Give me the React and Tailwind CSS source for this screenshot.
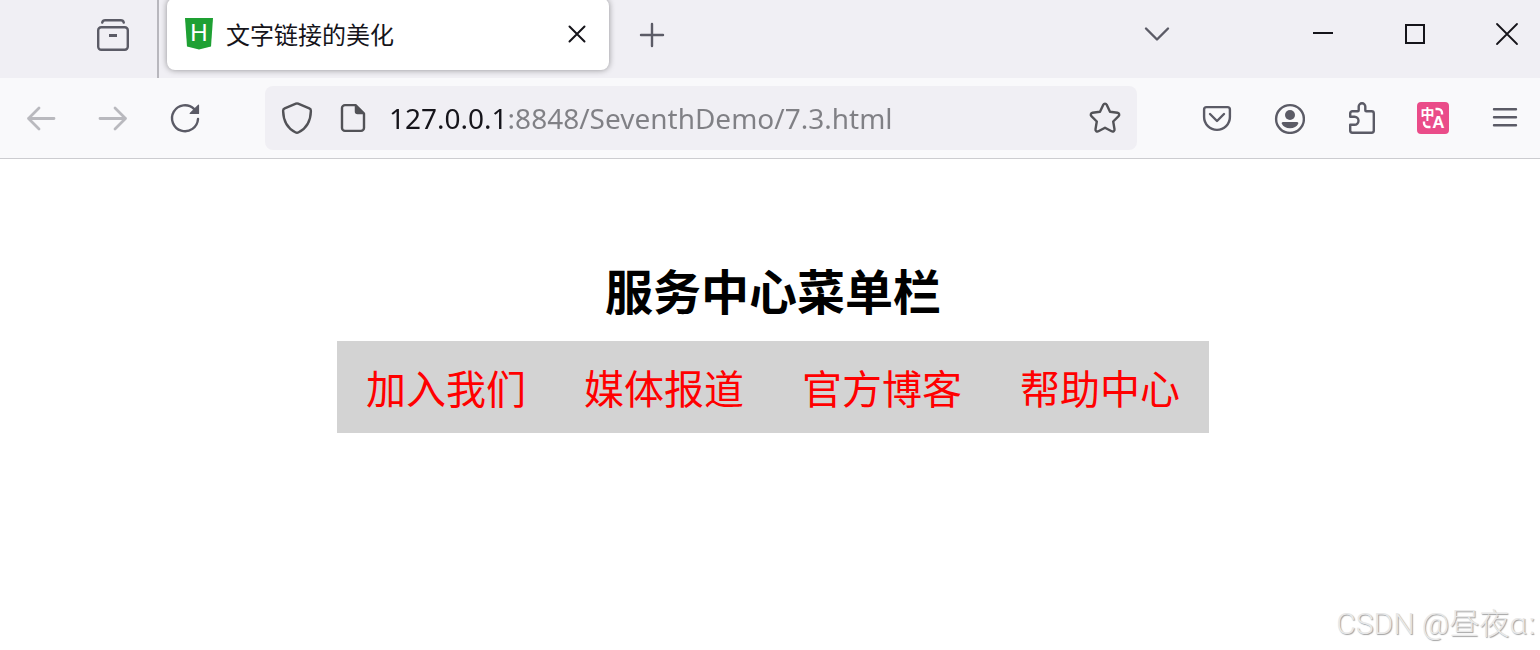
import React, { useState } from 'react';

const MENU_ITEMS = ['加入我们', '媒体报道', '官方博客', '帮助中心'];

// Shared 32px icon frame for the browser chrome
function Icon({ children, className = 'text-[#5b5b66]' }) {
  return (
    <svg
      viewBox="0 0 32 32"
      fill="none"
      stroke="currentColor"
      strokeWidth="2.4"
      strokeLinecap="round"
      strokeLinejoin="round"
      aria-hidden="true"
      className={`size-8 shrink-0 ${className}`}
    >
      {children}
    </svg>
  );
}

function IconButton({ label, children, className = 'w-16', ...props }) {
  return (
    <button
      type="button"
      aria-label={label}
      className={`flex h-16 shrink-0 items-center justify-center ${className}`}
      {...props}
    >
      {children}
    </button>
  );
}

function TabStrip() {
  return (
    <div className="flex h-[78px] items-start overflow-hidden bg-[#f0eff4]">
      <div className="flex h-full w-[159px] shrink-0 items-start justify-end border-r-2 border-[#b8b7bd] pt-[3px] pr-3">
        <IconButton label="Firefox View">
          <Icon>
            <rect x="1.2" y="8.2" width="29.6" height="22.6" rx="3" />
            <path d="M5.2 3.6C5.6 2 6.6 1.2 8.2 1.2h15.6c1.6 0 2.6.8 3 2.4" />
            <path d="M12 16.5h8" strokeWidth="3" strokeLinecap="butt" />
          </Icon>
        </IconButton>
      </div>

      <div className="-mt-0.5 ml-2 flex h-[72px] w-[442px] items-center rounded-lg bg-white pl-4 shadow-[0_0_6px_rgba(0,0,0,0.4)]">
        <svg viewBox="0 0 32 32" aria-hidden="true" className="mr-[11px] size-8 shrink-0">
          <path d="M2 0h28l-2 28.5L16 31.500 4 28.500z" fill="#1ea033" />
          <text
            x="16"
            y="23"
            textAnchor="middle"
            fill="#fff"
            className="font-['Liberation_Sans',sans-serif] text-[24px]"
          >
            H
          </text>
        </svg>
        <span className="flex-1 text-2xl whitespace-nowrap text-[#15141a]">文字链接的美化</span>
        <IconButton label="Close tab">
          <Icon className="text-[#15141a]">
            <path d="M8.500 8.500l15 15M23.500 8.500l-15 15" strokeWidth="2" />
          </Icon>
        </IconButton>
      </div>

      <IconButton label="New tab" className="mt-[3px] ml-[11px] w-16">
        <Icon>
          <path d="M5 16h22M16 5v22" />
        </Icon>
      </IconButton>

      <div className="ml-auto flex pt-0.5 pr-px">
        <IconButton label="List all tabs" className="mr-[102px] w-16">
          <Icon>
            <path d="M5 10.500l11 11 11-11" />
          </Icon>
        </IconButton>
        <div className="flex gap-7">
          <IconButton label="Minimize">
            <Icon className="text-[#15141a]">
              <path d="M6 15h20" strokeWidth="2" strokeLinecap="butt" />
            </Icon>
          </IconButton>
          <IconButton label="Maximize">
            <Icon className="text-[#15141a]">
              <path d="M7 7h18v18H7z" strokeWidth="2" strokeLinejoin="miter" />
            </Icon>
          </IconButton>
          <IconButton label="Close window">
            <Icon className="text-[#15141a]">
              <path d="M6 6l20 20M26 6L6 26" strokeWidth="1.8" />
            </Icon>
          </IconButton>
        </div>
      </div>
    </div>
  );
}

function UrlBar() {
  const [url, setUrl] = useState('127.0.0.1:8848/SeventhDemo/7.3.html');

  return (
    <div className="mx-12 flex h-16 min-w-0 flex-1 items-center rounded-lg bg-[#f0eff4] px-1">
      <IconButton label="Tracking protection" className="w-14">
        <Icon className="text-[#525257]">
          <path d="M14.900 1.700a2.800 2.800 0 0 1 2.200 0l11.200 4.700c1 .400 1.600 1.300 1.600 2.400-.200 8.900-3.800 17.300-12.200 21.500a3.800 3.800 0 0 1-3.400 0C5.900 26.100 2.300 17.700 2.100 8.800c0-1.100.600-2 1.600-2.400z" />
        </Icon>
      </IconButton>
      <IconButton label="Site information" className="w-14">
        <Icon className="text-[#525257]">
          <path d="M18.500 3.100H8a3 3 0 0 0-3 3v19.800a3 3 0 0 0 3 3h16a3 3 0 0 0 3-3V11.500z" />
          <path d="M18.500 3.100v6.400a2 2 0 0 0 2 2H27z" fill="currentColor" strokeWidth="1.500" />
        </Icon>
      </IconButton>
      {/* the host is darker than the port and path */}
      <input
        type="text"
        aria-label="Address"
        spellCheck={false}
        value={url}
        onChange={(e) => setUrl(e.target.value)}
        className="ml-2 h-12 min-w-0 flex-1 bg-[linear-gradient(to_right,#15141a_117px,#808085_117px)] bg-clip-text font-['Noto_Sans',sans-serif] text-[28px] text-transparent outline-none"
      />
      <IconButton label="Bookmark this page" className="w-14">
        <Icon className="text-[#525257]">
          <path d="M14.300 2.700c.700-1.500 2.700-1.500 3.400 0l3.300 7 7.500 1c1.700.200 2.300 2.200 1.100 3.400l-5.400 5.400 1.300 7.700c.300 1.700-1.400 2.900-2.900 2.100L16 25.700l-6.600 3.600c-1.500.800-3.200-.400-2.900-2.100l1.300-7.700-5.400-5.400c-1.200-1.200-.600-3.200 1.100-3.400l7.500-1z" />
        </Icon>
      </IconButton>
    </div>
  );
}

function NavBar() {
  return (
    <div className="flex h-[81px] items-center border-b border-[#ccccd0] bg-[#f9f9fb] pr-[3px] pl-[9px]">
      <div className="flex gap-2">
        <IconButton label="Back" disabled>
          <Icon className="text-[#b9b9be]">
            <path d="M29 16.500H3.500M14 6L3.500 16.500 14 27" strokeWidth="2.800" />
          </Icon>
        </IconButton>
        <IconButton label="Forward" disabled>
          <Icon className="text-[#b9b9be]">
            <path d="M3 16.500h25.500M18 6l10.500 10.500L18 27" strokeWidth="2.800" />
          </Icon>
        </IconButton>
        <IconButton label="Reload">
          <Icon>
            <path d="M29 17A13 13 0 1 1 25 6.800" />
            <path d="M29.500 3.200v8.300h-8.300z" fill="currentColor" strokeWidth="1.200" />
          </Icon>
        </IconButton>
      </div>

      <UrlBar />

      <div className="flex gap-2">
        <IconButton label="Save to Pocket">
          <Icon>
            <path d="M5.500 5.100h21a2.400 2.400 0 0 1 2.400 2.400V15a12.900 12.900 0 0 1-25.800 0V7.500a2.400 2.400 0 0 1 2.400-2.400z" />
            <path d="M9 12l7 7 7-7" />
          </Icon>
        </IconButton>
        <IconButton label="Account">
          <Icon>
            <circle cx="17" cy="17" r="13.900" />
            <circle cx="17" cy="13" r="5" fill="currentColor" stroke="none" />
            <path
              d="M10 20h14c1 0 1.600.900 1.200 1.800C23.800 24.800 21 26.200 17 26.200s-6.800-1.400-8.200-4.400C8.400 20.900 9 20 10 20z"
              fill="currentColor"
              stroke="none"
            />
          </Icon>
        </IconButton>
        <IconButton label="Extensions">
          <Icon>
            <path d="M5.200 14.800v-3.400a2.200 2.200 0 0 1 2.200-2.200h5.300a1 1 0 0 0 1-1V4.600a3.300 3.300 0 0 1 6.600 0v3.600a1 1 0 0 0 1 1h5.300a2.200 2.200 0 0 1 2.200 2.200v17.200a2.200 2.200 0 0 1-2.200 2.200H7.400a2.200 2.200 0 0 1-2.200-2.200v-5.800h4.300a4 4 0 0 0 0-8z" />
          </Icon>
        </IconButton>
        <IconButton label="Translate">
          <Icon className="text-white">
            <rect width="32" height="32" rx="4" fill="#ea4c89" stroke="none" />
            <text
              x="10.500"
              y="17"
              textAnchor="middle"
              fill="currentColor"
              stroke="none"
              className="text-[14px] font-bold"
            >
              中
            </text>
            <text
              x="21.500"
              y="26"
              textAnchor="middle"
              fill="currentColor"
              stroke="none"
              className="font-['Liberation_Sans',sans-serif] text-[17px] font-bold"
            >
              A
            </text>
            <path d="M18.500 7H21a4 4 0 0 1 4 4v1.500M7 19.500V21a4 4 0 0 0 4 4h2.500" strokeLinecap="butt" />
          </Icon>
        </IconButton>
        <IconButton label="Menu">
          <Icon>
            <path d="M5 7.200h22M5 15.200h22M5 23.200h22" />
          </Icon>
        </IconButton>
      </div>
    </div>
  );
}

function App() {
  return (
    <div className="flex min-h-screen flex-col bg-white font-['Noto_Sans_CJK_SC',sans-serif]">
      <header>
        <TabStrip />
        <NavBar />
      </header>

      <main className="relative flex flex-1 flex-col items-center overflow-hidden pt-[98px] pl-1.5">
        <h1 className="text-5xl leading-[64px] font-bold text-black">服务中心菜单栏</h1>
        <nav className="mt-5 grid h-[92px] w-full max-w-[872px] grid-cols-4 items-center bg-[#d3d3d3]">
          {MENU_ITEMS.map((item) => (
            <a key={item} href="#" className="text-center text-[40px] text-[#ff0000]">
              {item}
            </a>
          ))}
        </nav>

        <p className="absolute right-1 bottom-1 font-[Roboto,'Noto_Sans_CJK_SC',sans-serif] text-[30px] font-light whitespace-nowrap text-[#e8e8e8] [text-shadow:1px_1px_1px_#a0a0a0]">
          CSDN @昼夜ɑː
        </p>
      </main>
    </div>
  );
}

export default App;
